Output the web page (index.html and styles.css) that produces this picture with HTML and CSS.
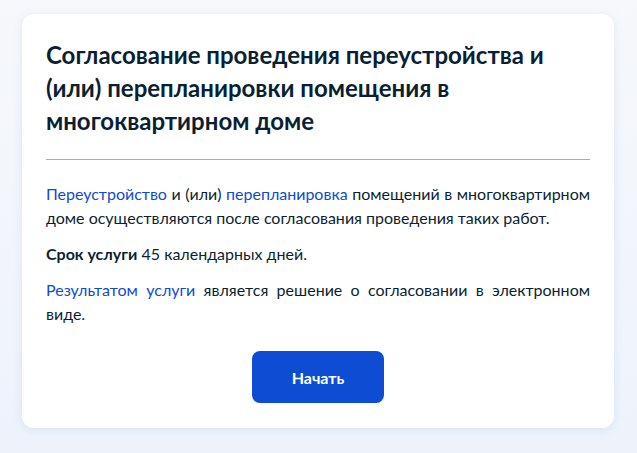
FILE: index.html
```html
<!DOCTYPE html>
<html lang="ru">
<head>
  <meta charset="UTF-8" />
  <meta name="viewport" content="width=device-width, initial-scale=1.0"/>
  <title>Согласование переустройства</title>
  <link rel="stylesheet" href="styles.css">
</head>
<body>
  <div class="card">
    <h1>Согласование проведения переустройства и (или) перепланировки помещения в многоквартирном доме</h1>
    <div class="divider"></div>
    <p><a href="#">Переустройство</a> и (или) <a href="#">перепланировка</a> помещений в многоквартирном доме осуществляются после согласования проведения таких работ.</p>
    <p><b>Срок услуги</b> 45 календарных дней.</p>
    <p><a href="#">Результатом услуги</a> является решение о согласовании в электронном виде.</p>
    <div class="actions">
      <button class="btn">Начать</button>
    </div>
  </div>
</body>
</html>
```
FILE: styles.css
```css
* { box-sizing: border-box; margin: 0; padding: 0; }
body {
  font-family: Lato, 'Noto Sans', sans-serif;
  background: linear-gradient(180deg, #f6f8fb, #eef3fb);
  min-height: 100vh;
  padding: 14px 23px 26px 22px;
  color: #0b1f33;
}
.card {
  width: 592px;
  background: #fff;
  border-radius: 12px;
  padding: 24px 24px 25px;
  box-shadow: 0 2px 10px rgba(125, 155, 205, 0.18);
}
h1 {
  font-size: 24px;
  line-height: 33px;
  font-weight: 700;
  margin-bottom: 22px;
  padding-right: 20px;
}
.divider {
  height: 1px;
  background: #8eaee8;
  margin-bottom: 22px;
}
p {
  font-size: 16px;
  line-height: 24px;
  text-align: justify;
  margin-bottom: 12px;
}
a { color: #0d4cd3; text-decoration: none; }
b { font-weight: 700; }
.actions {
  display: flex;
  justify-content: center;
  padding-top: 13px;
}
.btn {
  width: 132px;
  height: 52px;
  background: #0d4cd3;
  color: #fff;
  font-family: Lato, 'Noto Sans', sans-serif;
  font-size: 16px;
  font-weight: 700;
  border: none;
  border-radius: 8px;
  cursor: pointer;
}
```
